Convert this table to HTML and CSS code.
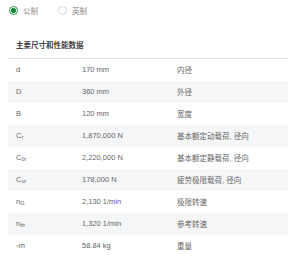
FILE: index.html
```html
<!DOCTYPE html>
<html lang="zh-CN">
<head>
  <meta charset="UTF-8" />
  <meta name="viewport" content="width=device-width, initial-scale=1.0"/>
  <title>主要尺寸和性能数据</title>
  <link rel="stylesheet" href="styles.css">
</head>
<body>

  <div class="units">
    <label class="unit checked"><span class="radio"></span>公制</label>
    <label class="unit"><span class="radio"></span>英制</label>
  </div>

  <div class="specs">
    <h4>主要尺寸和性能数据</h4>
    <table>
      <colgroup>
        <col class="c-sym" />
        <col class="c-val" />
        <col />
      </colgroup>
      <tr><td>d</td><td>170 mm</td><td>内径</td></tr>
      <tr><td>D</td><td>360 mm</td><td>外径</td></tr>
      <tr><td>B</td><td>120 mm</td><td>宽度</td></tr>
      <tr><td>C<sub>r</sub></td><td>1,870,000 N</td><td>基本额定动载荷, 径向</td></tr>
      <tr><td>C<sub>0r</sub></td><td>2,220,000 N</td><td>基本额定静载荷, 径向</td></tr>
      <tr><td>C<sub>ur</sub></td><td>178,000 N</td><td>疲劳极限载荷, 径向</td></tr>
      <tr><td>n<sub>G</sub></td><td>2,130 1/min</td><td>极限转速</td></tr>
      <tr><td>n<sub>θr</sub></td><td>1,320 1/min</td><td>参考转速</td></tr>
      <tr><td><small>≈</small>m</td><td>58.84 kg</td><td>重量</td></tr>
    </table>
  </div>

</body>
</html>
```

FILE: styles.css
```css
* { margin: 0; padding: 0; box-sizing: border-box; }

body {
  font-family: 'Liberation Sans', 'Noto Sans CJK SC', sans-serif;
  font-size: 7.5px;
  color: #666;
  background: #fff;
  padding: 0 0 0 8px;
}

.units {
  display: flex;
  align-items: center;
  gap: 20px;
  height: 21px;
  padding-left: 1px;
}

.unit {
  display: flex;
  align-items: center;
  gap: 5px;
  color: #888;
}

.radio {
  width: 9px;
  height: 9px;
  border-radius: 50%;
  border: 1px solid #d4d7da;
  background: #fff;
}

.unit.checked .radio {
  border: 1.5px solid #1f9b45;
  background: radial-gradient(circle, #16893a 0 2.3px, #fff 2.6px);
}

.specs h4 {
  font-size: 7.5px;
  font-weight: bold;
  color: #444;
  padding: 20px 0 0 8px;
  height: 37px;
  line-height: 10px;
}

.specs table {
  width: 280px;
  border-collapse: collapse;
  table-layout: fixed;
  border-top: 1px solid #dcdfe2;
}

.c-sym { width: 74px; }
.c-val { width: 95px; }

.specs td {
  height: 22px;
  padding: 0 0 0 8px;
  vertical-align: middle;
  white-space: nowrap;
}

.specs td + td { padding-left: 0; }

.specs tr:nth-child(even) td {
  background: #f5f6f7;
}

.specs sub {
  font-size: 5.5px;
  vertical-align: -1px;
}

.specs small {
  font-size: 5px;
}
```
